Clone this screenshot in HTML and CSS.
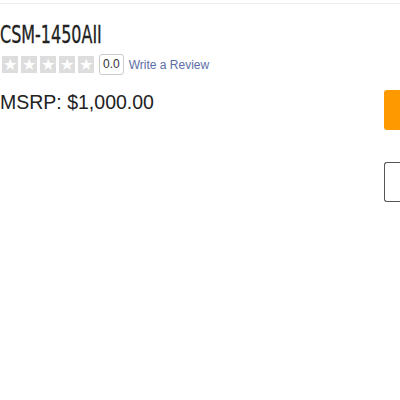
FILE: index.html
```html
<html>
<head>
    <title>CSM-1450AII</title>
    <meta charset="UTF-8">
    <link rel="stylesheet" href="styles.css">
</head>
<body>
<div class="topbar"></div>
<div class="product">
    <div class="info">
        <h1 class="title">CSM-1450AII</h1>
        <div class="rating">
            <div class="stars">
                <span class="star">&#9733;</span>
                <span class="star">&#9733;</span>
                <span class="star">&#9733;</span>
                <span class="star">&#9733;</span>
                <span class="star">&#9733;</span>
            </div>
            <span class="score">0.0</span>
            <a class="review" href="#">Write a Review</a>
        </div>
        <div class="price">MSRP: $1,000.00</div>
    </div>
    <div class="actions">
        <button class="btn-cart"></button>
        <button class="btn-wish"></button>
    </div>
</div>
</body>
</html>
```
FILE: styles.css
```css
body {
    margin:0;
    background:#fff;
    font-family: "Liberation Sans", Arial, sans-serif;
    color:#222;
    overflow:hidden;
}
.topbar {
    height:3px;
    border-bottom:1px solid #eee;
}
.product {
    display:flex;
    justify-content:space-between;
}
.info {
    padding-top:16px;
}
.title {
    margin:0;
    font-family: "DejaVu Sans Condensed", sans-serif;
    font-weight:normal;
    font-size:25px;
    line-height:29px;
    color:#222;
    -webkit-text-stroke:0.3px #222;
    transform:scaleX(0.71);
    transform-origin:left;
    white-space:nowrap;
}
.rating {
    display:flex;
    align-items:center;
    margin-top:5px;
    padding-left:2px;
}
.stars {
    display:flex;
    gap:3px;
}
.star {
    width:16px;
    height:17px;
    background:#ddd;
    color:#fff;
    font-size:16px;
    line-height:17px;
    text-align:center;
}
.score {
    margin-left:5px;
    border:1px solid #ccc;
    border-radius:3px;
    padding:0 3px;
    height:19px;
    line-height:19px;
    font-size:12px;
    color:#333;
}
.review {
    margin-left:5px;
    font-size:12px;
    color:#5b6ea8;
    text-decoration:none;
}
.price {
    margin-top:16px;
    font-size:19.5px;
    color:#222;
}
.actions {
    display:flex;
    flex-direction:column;
    gap:32px;
    padding-top:86px;
    width:16px;
}
.btn-cart {
    width:16px;
    height:40px;
    border:0;
    border-radius:3px 0 0 3px;
    background:#ff9900;
}
.btn-wish {
    width:16px;
    height:40px;
    border:1.5px solid #555;
    border-right:0;
    border-radius:3px 0 0 3px;
    background:#fff;
}
```
